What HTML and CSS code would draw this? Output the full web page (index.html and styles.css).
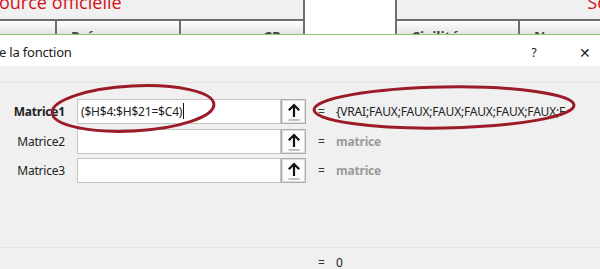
FILE: index.html
```html
<!DOCTYPE html>
<html lang="fr">
<head>
    <meta charset="UTF-8">
    <title>Arguments de la fonction</title>
    <link rel="stylesheet" href="styles.css">
</head>
<body>

<div class="sheet">
    <div class="sheet-title">ource officielle</div>
    <div class="sheet-blank"></div>
    <div class="sheet-title right">So</div>
    <div class="hcell">&nbsp;</div>
    <div class="hcell first">Prénom</div>
    <div class="hcell cp">CP</div>
    <div class="hcell civ">Civilité</div>
    <div class="hcell last">Nom</div>
</div>

<div class="dialog">
    <div class="titlebar">
        <span class="caption">e la fonction</span>
        <span class="tb-btn help">?</span>
        <span class="tb-btn close">&#x2715;</span>
    </div>

    <div class="dlg-body">
        <div class="topband"></div>

        <div class="args">
            <label class="arg-label bold">Matrice1</label>
            <div class="arg-input">($H$4:$H$21=$C4)<span class="caret"></span></div>
            <button class="ref-btn"><svg width="14" height="19" viewBox="0 0 14 19"><path d="M7 15V3M1.8 8.2L7 3l5.2 5.2" fill="none" stroke="#111" stroke-width="2.2"/><path d="M1.5 18h11" stroke="#888" stroke-width="1"/></svg></button>
            <span class="eq">=</span>
            <span class="arg-value">{VRAI;FAUX;FAUX;FAUX;FAUX;FAUX;FAUX;F</span>

            <label class="arg-label">Matrice2</label>
            <div class="arg-input"></div>
            <button class="ref-btn"><svg width="14" height="19" viewBox="0 0 14 19"><path d="M7 15V3M1.8 8.2L7 3l5.2 5.2" fill="none" stroke="#111" stroke-width="2.2"/><path d="M1.5 18h11" stroke="#888" stroke-width="1"/></svg></button>
            <span class="eq">=</span>
            <span class="arg-value hint">matrice</span>

            <label class="arg-label">Matrice3</label>
            <div class="arg-input"></div>
            <button class="ref-btn"><svg width="14" height="19" viewBox="0 0 14 19"><path d="M7 15V3M1.8 8.2L7 3l5.2 5.2" fill="none" stroke="#111" stroke-width="2.2"/><path d="M1.5 18h11" stroke="#888" stroke-width="1"/></svg></button>
            <span class="eq">=</span>
            <span class="arg-value hint">matrice</span>
        </div>

        <div class="result">
            <span class="eq">=</span>
            <span class="arg-value">0</span>
        </div>
    </div>
</div>

<!-- annotations drawn over the capture -->
<svg class="marks" width="600" height="269" viewBox="0 0 600 269">
    <ellipse cx="133" cy="108.5" rx="81" ry="22.5" transform="rotate(-3 133 108.5)" fill="none" stroke="#9b1b27" stroke-width="3"/>
    <ellipse cx="444" cy="107.5" rx="130" ry="20.5" transform="rotate(-1 444 107.5)" fill="none" stroke="#9b1b27" stroke-width="3"/>
</svg>

</body>
</html>
```

FILE: styles.css
```css
body {
    margin: 0;
    width: 600px;
    height: 269px;
    overflow: hidden;
    position: relative;
    background-color: #f0f0f0;
    font-family: "Noto Sans", "Open Sans", sans-serif;
    color: #222;
}

/* spreadsheet behind the dialog */
.sheet {
    display: grid;
    grid-template-columns: 57px 124px 122px 94px 123px 80px;
    grid-template-rows: 19px 15px;
    height: 34px;
    overflow: hidden;
    background-color: #f0f0f0;
}
.sheet-title {
    grid-column: 1 / 4;
    grid-row: 1;
    color: #d0121b;
    font-family: "Open Sans", sans-serif;
    font-size: 18px;
    line-height: 18px;
    margin-top: -7px;
    margin-left: -1px;
    white-space: nowrap;
}
.sheet-title.right {
    grid-column: 5 / 7;
    text-align: right;
    margin-right: -8px;
}
.sheet-blank {
    grid-column: 4;
    grid-row: 1 / 3;
    background-color: #fff;
    border-left: 2px solid #6e6e6e;
    border-right: 2px solid #6e6e6e;
}
.hcell {
    grid-row: 2;
    border-top: 2px solid #6e6e6e;
    border-right: 2px solid #6e6e6e;
    background: linear-gradient(#ffffff, #e4e4e4);
    color: #444;
    font-weight: bold;
    font-size: 14px;
    line-height: 14px;
    padding-top: 9px;
    padding-left: 14px;
    white-space: nowrap;
}
.hcell.cp {
    border-right: none;
    padding-left: 82px;
}
.hcell.civ {
    grid-column: 5;
}
.hcell.last {
    border-right: none;
}

/* dialog */
.dialog {
    border-top: 1px solid #8ec66a;
}
.titlebar {
    display: flex;
    align-items: center;
    height: 31px;
    padding-top: 3px;
    box-sizing: border-box;
    background-color: #fff;
    font-size: 13px;
    letter-spacing: -0.2px;
}
.caption {
    flex: 1;
    margin-left: -1px;
}
.tb-btn {
    text-align: center;
}
.help {
    font-size: 12px;
    width: 20px;
    margin-right: 31px;
}
.close {
    font-size: 14px;
    width: 20px;
    margin-right: 5px;
}

.topband {
    height: 16px;
    border-bottom: 1px solid #e2e2e2;
}

.args {
    display: grid;
    grid-template-columns: 77px 204px 25px 30px 1fr;
    grid-auto-rows: 25px;
    row-gap: 4.5px;
    align-items: center;
    margin-top: 16px;
    font-size: 12px;
    letter-spacing: -0.2px;
}
.arg-label {
    text-align: right;
    padding-right: 12px;
}
.arg-label.bold {
    font-weight: bold;
}
.arg-input {
    height: 23px;
    line-height: 23px;
    background-color: #fff;
    border: 1px solid #c4c4c4;
    padding-left: 3px;
    white-space: nowrap;
}
.caret {
    display: inline-block;
    width: 1px;
    height: 16px;
    background-color: #111;
    vertical-align: -3px;
    margin-left: 1px;
}
.ref-btn {
    height: 25px;
    width: 25px;
    padding: 0;
    border: 1px solid #adadad;
    background-color: #fbfbfb;
    box-shadow: inset 0 0 0 1px #dedede;
    display: flex;
    align-items: center;
    justify-content: center;
}
.eq {
    padding-left: 12px;
    color: #333;
}
.arg-value {
    white-space: nowrap;
    overflow: hidden;
}
.arg-value.hint {
    color: #9a9a9a;
    font-weight: bold;
}

.result {
    display: grid;
    grid-template-columns: 30px auto;
    margin-top: 64px;
    border-top: 1px solid #e2e2e2;
    padding-left: 306px;
    padding-top: 6px;
    font-size: 12px;
}

.marks {
    position: absolute;
    left: 0;
    top: 0;
    pointer-events: none;
}
```
